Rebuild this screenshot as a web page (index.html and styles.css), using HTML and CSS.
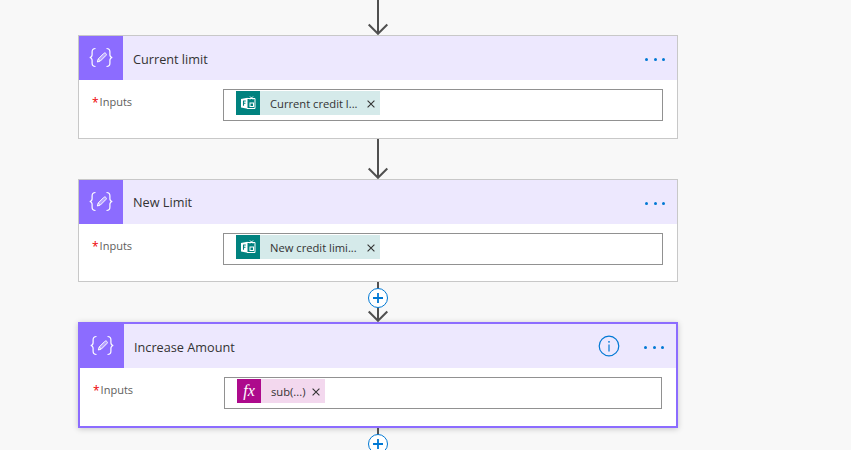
FILE: index.html
```html
<!DOCTYPE html>
<html lang="en">
<head>
    <meta charset="UTF-8">
    <meta name="viewport" content="width=device-width, initial-scale=1.0">
    <title>Flow Designer</title>
    <link rel="stylesheet" href="styles.css">
</head>
<body>

    <!-- Shared icons -->
    <svg class="icon-defs" aria-hidden="true">
        <symbol id="icon-variable" viewBox="0 0 44 44">
            <path d="M16.5 12.500c-2.800 0-3.400 1.100-3.400 3.200v3c0 1.500-.7 2.400-2.300 2.800 1.600.4 2.300 1.300 2.300 2.800v3c0 2.100.6 3.200 3.400 3.200" fill="none" stroke="#fff" stroke-width="1.200"/>
            <path d="M27.500 12.500c2.800 0 3.400 1.100 3.400 3.200v3c0 1.500.7 2.400 2.300 2.800-1.600.4-2.300 1.300-2.300 2.800v3c0 2.100-.6 3.200-3.400 3.200" fill="none" stroke="#fff" stroke-width="1.200"/>
            <path d="M18.300 26l.9-3 5.700-5.700c.5-.5 1.300-.5 1.800 0l.3.300c.5.500.5 1.300 0 1.800L21.300 25.100z" fill="#fff" fill-opacity=".35" stroke="#fff" stroke-width="1"/>
            <path d="M19.300 23l1.900 1.900" stroke="#fff" stroke-width=".9"/>
        </symbol>
        <symbol id="icon-forms" viewBox="0 0 24 24">
            <path d="M11 7.500h8v10h-8" fill="none" stroke="#fff" stroke-width="1"/>
            <path d="M5 8l6.500-1.300v11L5 16.500z" fill="#fff"/>
            <path d="M7 10h2.800M7.500 10v4.800M7.500 12.300h2" fill="none" stroke="#00827f" stroke-width="1.100"/>
            <path d="M14 5.500l3 3M17 5.500l-3 3" stroke="#fff" stroke-width="1"/>
            <rect x="14" y="12" width="3.500" height="3.500" fill="#00827f" stroke="#fff" stroke-width="1"/>
        </symbol>
        <symbol id="icon-close" viewBox="0 0 8 8">
            <path d="M.6.600l6.800 6.800M7.400.600L.6 7.400" stroke="#333" stroke-width="1.100"/>
        </symbol>
        <symbol id="icon-arrow" viewBox="0 0 24 40">
            <path d="M12 0v39" stroke="#505050" stroke-width="2"/>
            <path d="M2.700 29.500L12 38.800l9.300-9.300" fill="none" stroke="#505050" stroke-width="2"/>
        </symbol>
        <symbol id="icon-plus" viewBox="0 0 24 24">
            <circle cx="12" cy="12" r="9.500" fill="#fff" stroke="#0078d4" stroke-width="1"/>
            <path d="M12 7v10M7 12h10" stroke="#0078d4" stroke-width="1.800"/>
        </symbol>
    </svg>

    <div class="flow">
        <div class="connector connector-top">
            <svg class="arrow"><use href="#icon-arrow"/></svg>
        </div>

        <div class="card">
            <div class="card-header">
                <span class="card-icon"><svg class="card-glyph"><use href="#icon-variable"/></svg></span>
                <span class="card-title">Current limit</span>
                <span class="dots"><i></i><i></i><i></i></span>
            </div>
            <div class="card-body">
                <label class="field-label"><span class="required">*</span><span>Inputs</span></label>
                <div class="field-box">
                    <span class="token token-forms">
                        <span class="token-icon"><svg class="token-glyph"><use href="#icon-forms"/></svg></span>
                        <span class="token-text">Current credit l...</span>
                        <svg class="token-close"><use href="#icon-close"/></svg>
                    </span>
                </div>
            </div>
        </div>

        <div class="connector">
            <svg class="arrow"><use href="#icon-arrow"/></svg>
        </div>

        <div class="card card-short">
            <div class="card-header">
                <span class="card-icon"><svg class="card-glyph"><use href="#icon-variable"/></svg></span>
                <span class="card-title">New Limit</span>
                <span class="dots"><i></i><i></i><i></i></span>
            </div>
            <div class="card-body">
                <label class="field-label"><span class="required">*</span><span>Inputs</span></label>
                <div class="field-box">
                    <span class="token token-forms">
                        <span class="token-icon"><svg class="token-glyph"><use href="#icon-forms"/></svg></span>
                        <span class="token-text">New credit limi...</span>
                        <svg class="token-close"><use href="#icon-close"/></svg>
                    </span>
                </div>
            </div>
        </div>

        <div class="connector">
            <svg class="arrow"><use href="#icon-arrow"/></svg>
            <svg class="plus"><use href="#icon-plus"/></svg>
        </div>

        <div class="card card-selected">
            <div class="card-header">
                <span class="card-icon"><svg class="card-glyph"><use href="#icon-variable"/></svg></span>
                <span class="card-title">Increase Amount</span>
                <svg class="info" viewBox="0 0 22 22">
                    <circle cx="11" cy="11" r="9.800" fill="none" stroke="#0078d4" stroke-width="1.200"/>
                    <path d="M11 9.500v7" stroke="#0078d4" stroke-width="1.200"/>
                    <circle cx="11" cy="6.800" r=".9" fill="#0078d4"/>
                </svg>
                <span class="dots"><i></i><i></i><i></i></span>
            </div>
            <div class="card-body">
                <label class="field-label"><span class="required">*</span><span>Inputs</span></label>
                <div class="field-box">
                    <span class="token token-expr">
                        <span class="token-icon token-icon-fx">fx</span>
                        <span class="token-text">sub(...)</span>
                        <svg class="token-close"><use href="#icon-close"/></svg>
                    </span>
                </div>
            </div>
        </div>

        <div class="connector">
            <svg class="arrow"><use href="#icon-arrow"/></svg>
            <svg class="plus"><use href="#icon-plus"/></svg>
        </div>
    </div>

</body>
</html>
```

FILE: styles.css
```css
html, body {
    height: 100%;
    margin: 0;
    overflow: hidden;
}

body {
    background-color: #f8f8f8;
    font-family: "Open Sans", "Noto Sans", Arial, sans-serif;
    color: #333;
}

.icon-defs {
    display: none;
}

.flow {
    width: 600px;
    margin-left: 78px;
    display: flex;
    flex-direction: column;
}

/* Lines between the cards */
.connector {
    position: relative;
    height: 40px;
    display: flex;
    justify-content: center;
}

.connector-top {
    height: 35px;
    align-items: flex-end;
}

.arrow {
    width: 24px;
    height: 40px;
    flex: none;
}

.plus {
    position: absolute;
    left: 288px;
    top: 4px;
    width: 24px;
    height: 24px;
}

/* Cards */
.card {
    background: #fff;
    border: 1px solid #c8c8c8;
    box-sizing: border-box;
}

.card-selected {
    border: 2px solid #8c6cff;
    box-shadow: 0 1px 6px rgba(0, 0, 0, 0.2);
}

.card-header {
    display: flex;
    align-items: center;
    height: 44px;
    background: #ede8fe;
}

.card-icon {
    width: 44px;
    height: 44px;
    flex: none;
    background: #8c6cff;
}

.card-glyph {
    display: block;
    width: 44px;
    height: 44px;
}

.card-title {
    flex: 1;
    margin-left: 10px;
    padding-top: 1px;
    font-size: 12.700px;
}

.card-short .card-title {
    padding-top: 0;
}

.info {
    width: 22px;
    height: 22px;
    margin-right: 24px;
}

.dots {
    display: flex;
    gap: 5.300px;
    margin: 2px 12px 0 0;
}

.dots i {
    width: 3px;
    height: 3px;
    border-radius: 50%;
    background: #0078d4;
}

.card-body {
    display: grid;
    grid-template-columns: 131px 1fr;
    padding: 9px 14px 17px 13px;
}

.card-short .card-body {
    padding-bottom: 16px;
}

.field-label {
    display: flex;
    gap: 1px;
    padding-top: 5px;
    font-size: 11px;
    color: #605e5c;
}

.required {
    color: #e00;
    font-size: 12px;
}

.field-box {
    height: 32px;
    box-sizing: border-box;
    border: 1px solid #919191;
    padding: 1px 12px;
    display: flex;
}

.token {
    display: flex;
    align-items: center;
    height: 24px;
    font-size: 11.200px;
    color: #333;
}

.token-forms {
    background: #d5eaea;
}

.token-expr {
    background: #f3d8ee;
}

.token-icon {
    width: 24px;
    height: 24px;
    flex: none;
}

.token-forms .token-icon {
    background: #00827f;
}

.token-icon-fx {
    background: #ad0a8c;
    color: #fff;
    font-family: "Liberation Serif", serif;
    font-style: italic;
    font-size: 16px;
    line-height: 24px;
    text-align: center;
}

.token-glyph {
    display: block;
    width: 24px;
    height: 24px;
}

.token-text {
    margin-left: 10px;
    padding-top: 1px;
}

.token-forms .token-text {
    width: 88px;
}

.token-expr .token-text {
    width: 34px;
}

.token-close {
    width: 8px;
    height: 8px;
    margin: 2px 5px 0 9px;
}

.token-expr .token-close {
    margin-left: 7px;
}
```
